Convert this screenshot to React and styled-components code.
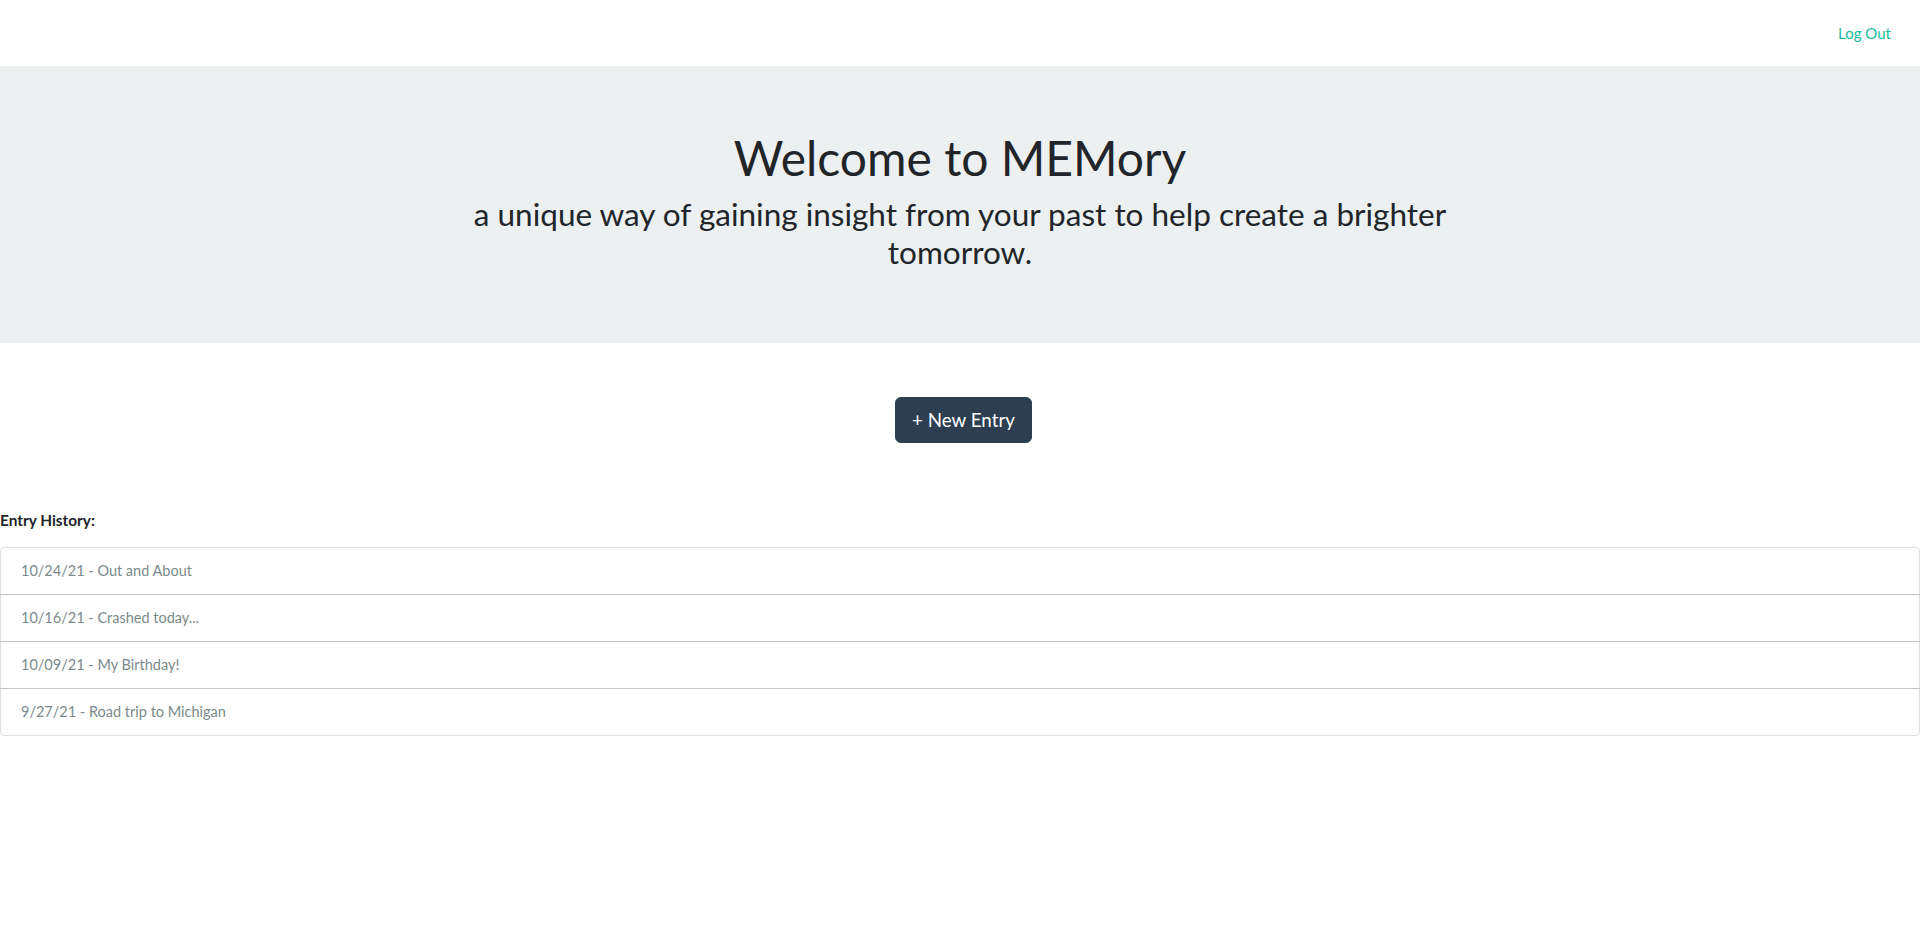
import React from "react"
import styled, { createGlobalStyle } from "styled-components"

const GlobalStyle = createGlobalStyle`
  * {
    box-sizing: border-box;
  }
  body {
    margin: 0;
    font-family: Lato, "Open Sans", "Liberation Sans", sans-serif;
    font-size: 15px;
    line-height: 1.5;
    color: #212529;
    background: #fff;
  }
`

const NavBar = styled.nav`
  height: 66px;
  display: flex;
  justify-content: flex-end;
  align-items: center;
  padding: 0 29px 0 0;
`

const NavLink = styled.a`
  color: #18bc9c;
  font-size: 15px;
  text-decoration: none;
  cursor: pointer;
`

const Jumbotron = styled.header`
  background: #ecf0f1;
  padding: 63px 32px 64px;
  display: flex;
  justify-content: center;
  text-align: center;
`

const JumboInner = styled.div`
  width: 1110px;
`

const Title = styled.h1`
  margin: 0 0 8px;
  font-size: 48px;
  font-weight: 400;
  line-height: 1.2;
`

const Subtitle = styled.h3`
  margin: 0 0 8px;
  font-size: 31.5px;
  font-weight: 400;
  line-height: 38px;
`

const Actions = styled.div`
  display: flex;
  justify-content: center;
  padding: 54px 0 66px 7px;
`

const PrimaryButton = styled.button`
  font-family: inherit;
  font-size: 18.75px;
  line-height: 28px;
  padding: 8px 16px;
  color: #fff;
  background: #2c3e50;
  border: 1px solid #2c3e50;
  border-radius: 6px;
  cursor: pointer;
`

const SectionLabel = styled.div`
  font-weight: 700;
  font-size: 15.4px;
  line-height: 22.5px;
  margin-bottom: 15.5px;
`

const ListGroup = styled.ul`
  list-style: none;
  margin: 0;
  padding: 0;
  display: flex;
  flex-direction: column;
`

const ListItem = styled.li`
  padding: 12px 20px;
  font-size: 14.5px;
  line-height: 22px;
  color: #7b8a8b;
  border: 1px solid rgba(0, 0, 0, 0.125);
  margin-bottom: -1px;
  cursor: pointer;
  &:first-child {
    border-radius: 4px 4px 0 0;
  }
  &:last-child {
    margin-bottom: 0;
    border-radius: 0 0 4px 4px;
  }
`

const entries = [
  "10/24/21 - Out and About",
  "10/16/21 - Crashed today...",
  "10/09/21 - My Birthday!",
  "9/27/21 - Road trip to Michigan",
]

const App = () => (
  <>
    <GlobalStyle />
    <NavBar>
      <NavLink>Log Out</NavLink>
    </NavBar>
    <Jumbotron>
      <JumboInner>
        <Title>Welcome to MEMory</Title>
        <Subtitle>
          a unique way of gaining insight from your past to help create a brighter tomorrow.
        </Subtitle>
      </JumboInner>
    </Jumbotron>
    <Actions>
      <PrimaryButton>+ New Entry</PrimaryButton>
    </Actions>
    <SectionLabel>Entry History:</SectionLabel>
    <ListGroup>
      {entries.map((entry) => (
        <ListItem key={entry}>{entry}</ListItem>
      ))}
    </ListGroup>
  </>
)

export default App
